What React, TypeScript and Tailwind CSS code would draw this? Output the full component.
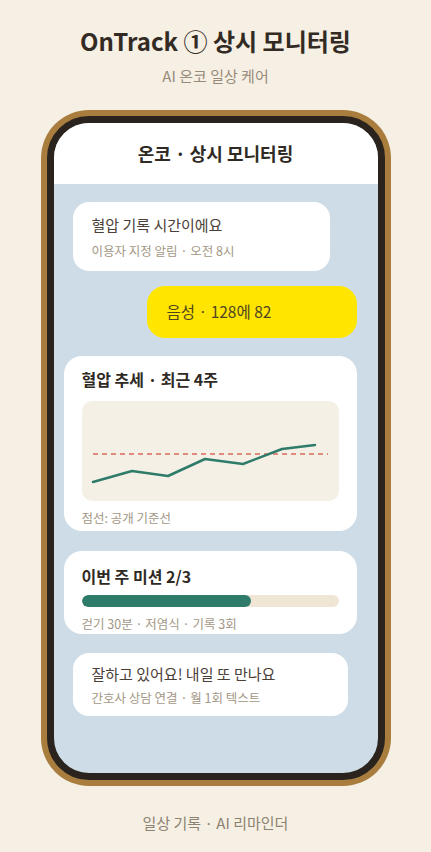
const font = { fontFamily: '"Noto Sans CJK KR", "Noto Sans", sans-serif' };

function TrendChart() {
  const pts = '11,81 50,70 86,75 123,58 161,63 200,48 233,44';
  return (
    <svg viewBox="0 0 257 100" className="h-full w-full">
      <line x1="11" y1="53" x2="246" y2="53" stroke="#d9695c" strokeWidth="1.5" strokeDasharray="5 4" />
      <polyline points={pts} fill="none" stroke="#2e7b6a" strokeWidth="2.5" strokeLinejoin="round" strokeLinecap="round" />
    </svg>
  );
}

export default function App() {
  return (
    <div className="flex min-h-screen w-full flex-col items-center bg-[#f6efe3]" style={font}>
      <h1 className="mt-[25px] text-[24px] font-bold leading-[32px] text-[#332b23]">OnTrack ① 상시 모니터링</h1>
      <p className="mt-[9px] text-[15px] leading-[20px] text-[#978c7c]">AI 온코 일상 케어</p>

      {/* phone */}
      <div className="mt-[24px] h-[676px] w-[350px] rounded-[48px] bg-[#a97d3d] p-[6px]">
        <div className="flex h-full flex-col overflow-hidden rounded-[42px] border-[7px] border-[#2b241e] bg-[#cddce6]">
          <div className="flex h-[61px] shrink-0 items-center justify-center bg-white">
            <span className="text-[18px] font-bold text-[#2f2a24]">온코 · 상시 모니터링</span>
          </div>

          <div className="flex flex-col">
            <div className="ml-[19px] mt-[18px] flex h-[69px] w-[257px] flex-col justify-center rounded-[16px] bg-white pl-[19px]">
              <span className="text-[15px] leading-[22px] text-[#4a4037]">혈압 기록 시간이에요</span>
              <span className="mt-[7px] text-[12.5px] leading-[16px] text-[#a39785]">이용자 지정 알림 · 오전 8시</span>
            </div>

            <div className="ml-[93px] mt-[15px] flex h-[52px] w-[210px] items-center rounded-[18px] bg-[#ffe500] pl-[20px]">
              <span className="text-[15.5px] text-[#4f4420]">음성 · 128에 82</span>
            </div>

            <div className="ml-[10px] mt-[18px] flex h-[175px] w-[293px] flex-col rounded-[18px] bg-white px-[18px] pt-[12px]">
              <span className="text-[16px] font-bold leading-[22px] text-[#2f2a24]">혈압 추세 · 최근 4주</span>
              <div className="mt-[11px] h-[100px] w-[257px] rounded-[10px] bg-[#f5f0e6]">
                <TrendChart />
              </div>
              <span className="mt-[9px] text-[12.5px] leading-[16px] text-[#a39785]">점선: 공개 기준선</span>
            </div>

            <div className="ml-[10px] mt-[20px] flex h-[83px] w-[293px] flex-col rounded-[18px] bg-white px-[18px] pt-[14px]">
              <span className="text-[16px] font-bold leading-[22px] text-[#2f2a24]">이번 주 미션 2/3</span>
              <div className="mt-[8px] h-[12px] w-[257px] overflow-hidden rounded-full bg-[#efe6d6]">
                <div className="h-full w-[66%] rounded-full bg-[#2e7b6a]" />
              </div>
              <span className="mt-[9px] text-[12.5px] leading-[16px] text-[#a39785]">걷기 30분 · 저염식 · 기록 3회</span>
            </div>

            <div className="ml-[19px] mt-[19px] flex h-[63px] w-[275px] flex-col justify-center rounded-[16px] bg-white pl-[19px]">
              <span className="text-[15px] leading-[22px] text-[#4a4037]">잘하고 있어요! 내일 또 만나요</span>
              <span className="mt-[5px] text-[12.5px] leading-[16px] text-[#a39785]">간호사 상담 연결 · 월 1회 텍스트</span>
            </div>
          </div>
        </div>
      </div>

      <p className="mt-[27px] text-[15px] leading-[20px] text-[#8c8272]">일상 기록 · AI 리마인더</p>
    </div>
  );
}
